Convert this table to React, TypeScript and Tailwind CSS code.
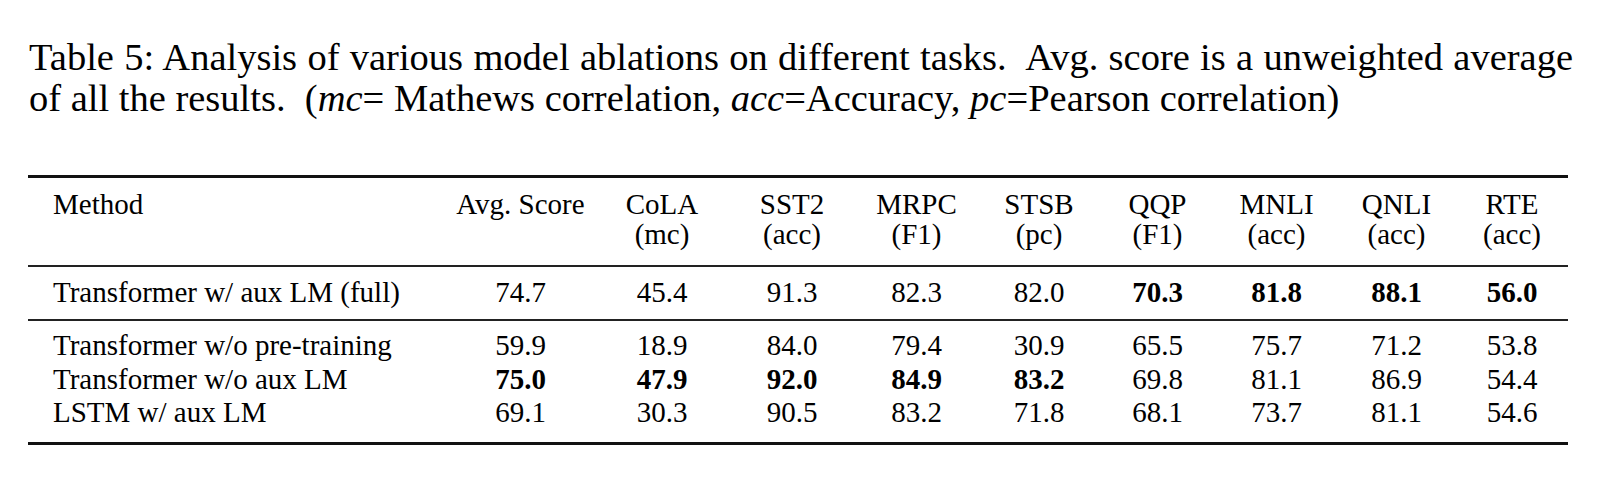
import React from 'react';

const COLS =
  'grid grid-cols-[419px_147px_136px_124px_125px_120px_117px_121px_119px_112px]';

const HEADERS: string[][] = [
  ['Avg. Score'],
  ['CoLA', '(mc)'],
  ['SST2', '(acc)'],
  ['MRPC', '(F1)'],
  ['STSB', '(pc)'],
  ['QQP', '(F1)'],
  ['MNLI', '(acc)'],
  ['QNLI', '(acc)'],
  ['RTE', '(acc)'],
];

// a leading * marks the best score in a column (set in bold)
const FULL_ROW = {
  method: 'Transformer w/ aux LM (full)',
  values: ['74.7', '45.4', '91.3', '82.3', '82.0', '*70.3', '*81.8', '*88.1', '*56.0'],
};

const ABLATIONS = [
  {
    method: 'Transformer w/o pre-training',
    values: ['59.9', '18.9', '84.0', '79.4', '30.9', '65.5', '75.7', '71.2', '53.8'],
  },
  {
    method: 'Transformer w/o aux LM',
    values: ['*75.0', '*47.9', '*92.0', '*84.9', '*83.2', '69.8', '81.1', '86.9', '54.4'],
  },
  {
    method: 'LSTM w/ aux LM',
    values: ['69.1', '30.3', '90.5', '83.2', '71.8', '68.1', '73.7', '81.1', '54.6'],
  },
];

const Row: React.FC<{ method: string; values: string[]; lh: string }> = ({ method, values, lh }) => (
  <div className={`${COLS} ${lh}`}>
    <div className="pl-[25px] whitespace-nowrap">{method}</div>
    {values.map((v, i) =>
      v.startsWith('*') ? (
        <div key={i} className="text-center font-bold">
          {v.slice(1)}
        </div>
      ) : (
        <div key={i} className="text-center">
          {v}
        </div>
      )
    )}
  </div>
);

export default function App() {
  return (
    <div className="w-[1620px] h-[504px] bg-white text-black font-['Liberation_Serif',serif] pt-[37px] pl-[28px]">
      <div className="ml-[1px] w-[1544px] text-[38.5px] leading-[41px]">
        <div className="text-justify [text-align-last:justify] whitespace-nowrap">
          Table 5: Analysis of various model ablations on different tasks.{'\u00a0'} Avg. score is a unweighted average
        </div>
        <div className="whitespace-nowrap">
          of all the results.{'\u00a0'} (<i>mc</i>= Mathews correlation, <i>acc</i>=Accuracy, <i>pc</i>=Pearson correlation)
        </div>
      </div>

      <div className="mt-[56px] w-[1540px] text-[29px]">
        <div className="h-[3px] bg-[#111]" />
        <div className={`${COLS} pt-[11px] pb-[16px] leading-[30px]`}>
          <div className="pl-[25px]">Method</div>
          {HEADERS.map((h, i) => (
            <div key={i} className="flex flex-col items-center whitespace-nowrap">
              {h.map((line, j) => (
                <span key={j}>{line}</span>
              ))}
            </div>
          ))}
        </div>
        <div className="h-[2px] bg-[#222]" />
        <div className="pt-[8px] pb-[10px]">
          <Row method={FULL_ROW.method} values={FULL_ROW.values} lh="leading-[34px]" />
        </div>
        <div className="h-[2px] bg-[#222]" />
        <div className="pt-[8px] pb-[12px]">
          {ABLATIONS.map((r) => (
            <Row key={r.method} method={r.method} values={r.values} lh="leading-[33.5px]" />
          ))}
        </div>
        <div className="h-[3px] bg-[#111]" />
      </div>
    </div>
  );
}
